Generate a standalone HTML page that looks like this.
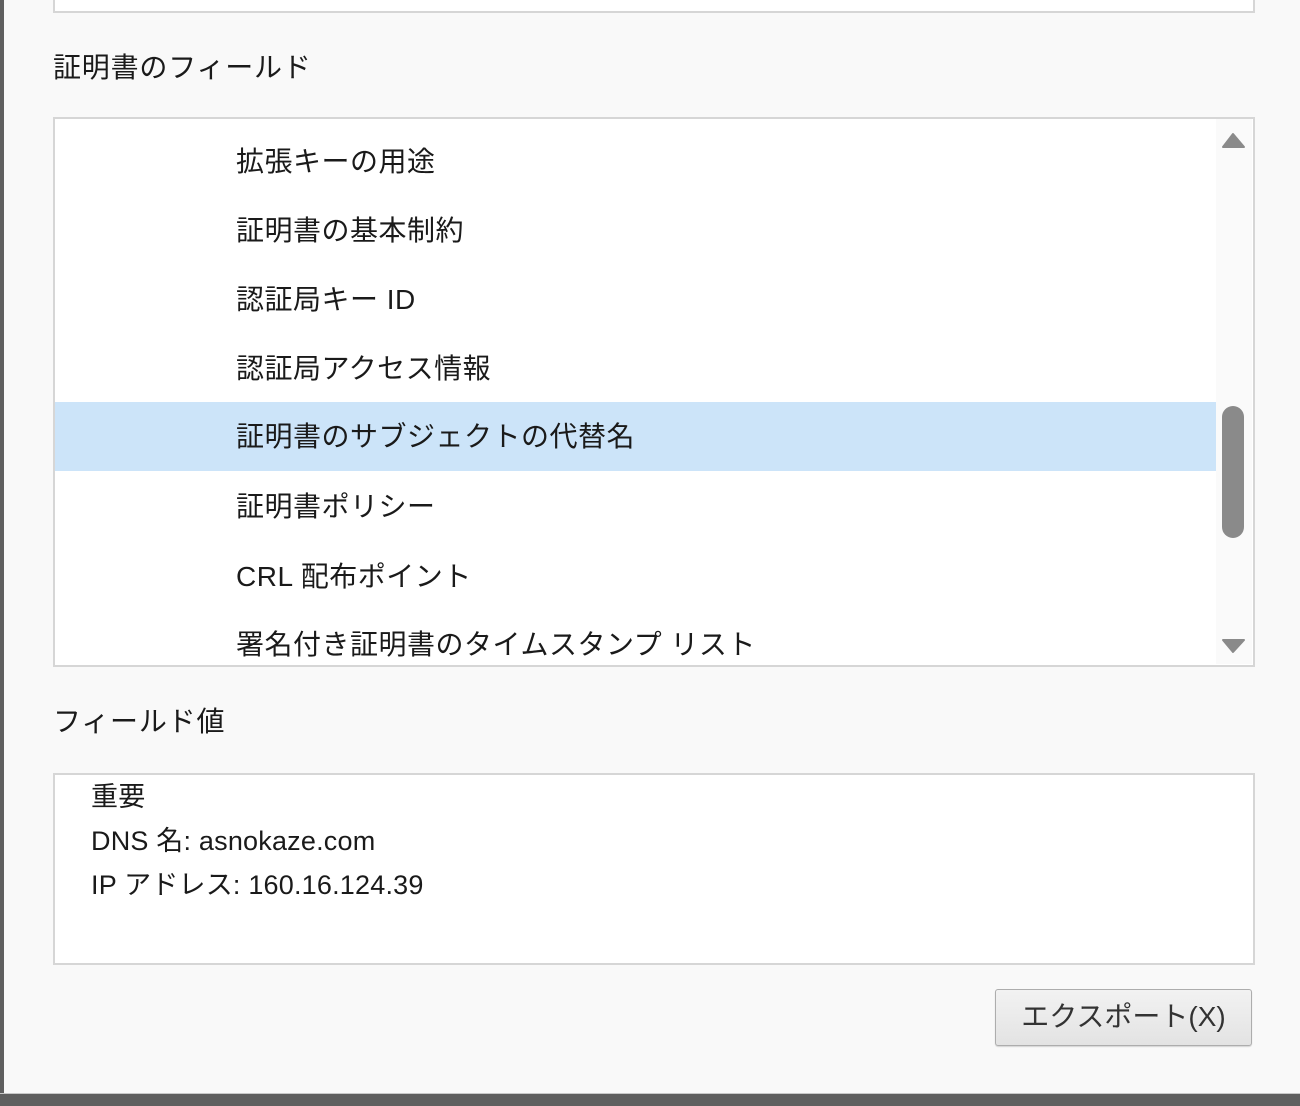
<!DOCTYPE html>
<html><head><meta charset="utf-8"><style>
*{margin:0;padding:0;box-sizing:border-box}
body{width:1300px;height:1106px;background:#f9f9f9;position:relative;overflow:hidden;font-family:"Liberation Sans","Noto Sans CJK JP",sans-serif;color:#1a1a1a}
.lb{position:absolute;left:0;top:0;width:4px;height:1106px;background:#5f5f5f}
.bb{position:absolute;left:0;top:1093px;width:1300px;height:13px;background:#5f5f5f;border-top:1px solid #c8c8c8}
.box{position:absolute;background:#fff;border:2px solid #d6d6d6}
.lbl{position:absolute;font-size:28px;line-height:34px;white-space:nowrap;letter-spacing:0.8px}
.row{position:absolute;left:0;width:1161px;height:69px;font-size:28px;line-height:69px;padding-left:181px;white-space:nowrap;letter-spacing:0.5px}
.sel{background:#cce4f9}
.sb{position:absolute;left:1161px;top:0;width:36px;height:545px;background:#fafafa}
.val{position:absolute;left:36px;font-size:27px;line-height:44px;white-space:nowrap;letter-spacing:0.2px}
.btn{position:absolute;left:995px;top:989px;width:257px;height:57px;border:1px solid #adadad;border-radius:3px;background:linear-gradient(#f2f2f2,#e3e3e3);font-size:28px;line-height:54px;text-align:center;color:#333;box-shadow:0 1px 1px rgba(0,0,0,.15)}
</style></head><body>
<div class="lb"></div>
<div class="box" style="left:53px;top:-10px;width:1202px;height:23px"></div>
<div class="lbl" style="left:53px;top:51px">証明書のフィールド</div>
<div class="box" style="left:53px;top:117px;width:1202px;height:550px;overflow:hidden">
 <div class="row" style="top:8px">拡張キーの用途</div>
 <div class="row" style="top:77px">証明書の基本制約</div>
 <div class="row" style="top:146px">認証局キー ID</div>
 <div class="row" style="top:215px">認証局アクセス情報</div>
 <div class="row sel" style="top:283px">証明書のサブジェクトの代替名</div>
 <div class="row" style="top:353px">証明書ポリシー</div>
 <div class="row" style="top:423px">CRL 配布ポイント</div>
 <div class="row" style="top:491px">署名付き証明書のタイムスタンプ リスト</div>
 <div class="sb">
  <svg width="36" height="545" style="position:absolute;left:0;top:0">
   <path d="M7 28 L17 15 L28 28 Z" fill="#8a8a8a" stroke="#8a8a8a" stroke-width="2" stroke-linejoin="round"/>
   <path d="M7 521 L28 521 L17 533 Z" fill="#8a8a8a" stroke="#8a8a8a" stroke-width="2" stroke-linejoin="round"/>
   <rect x="6" y="287" width="22" height="132" rx="11" fill="#8a8a8a"/>
  </svg>
 </div>
</div>
<div class="lbl" style="left:53px;top:705px">フィールド値</div>
<div class="box" style="left:53px;top:773px;width:1202px;height:192px">
 <div class="val" style="top:0px">重要</div>
 <div class="val" style="top:44px">DNS 名: asnokaze.com</div>
 <div class="val" style="top:88px">IP アドレス: 160.16.124.39</div>
</div>
<div class="btn">エクスポート(X)</div>
<div class="bb"></div>
</body></html>
